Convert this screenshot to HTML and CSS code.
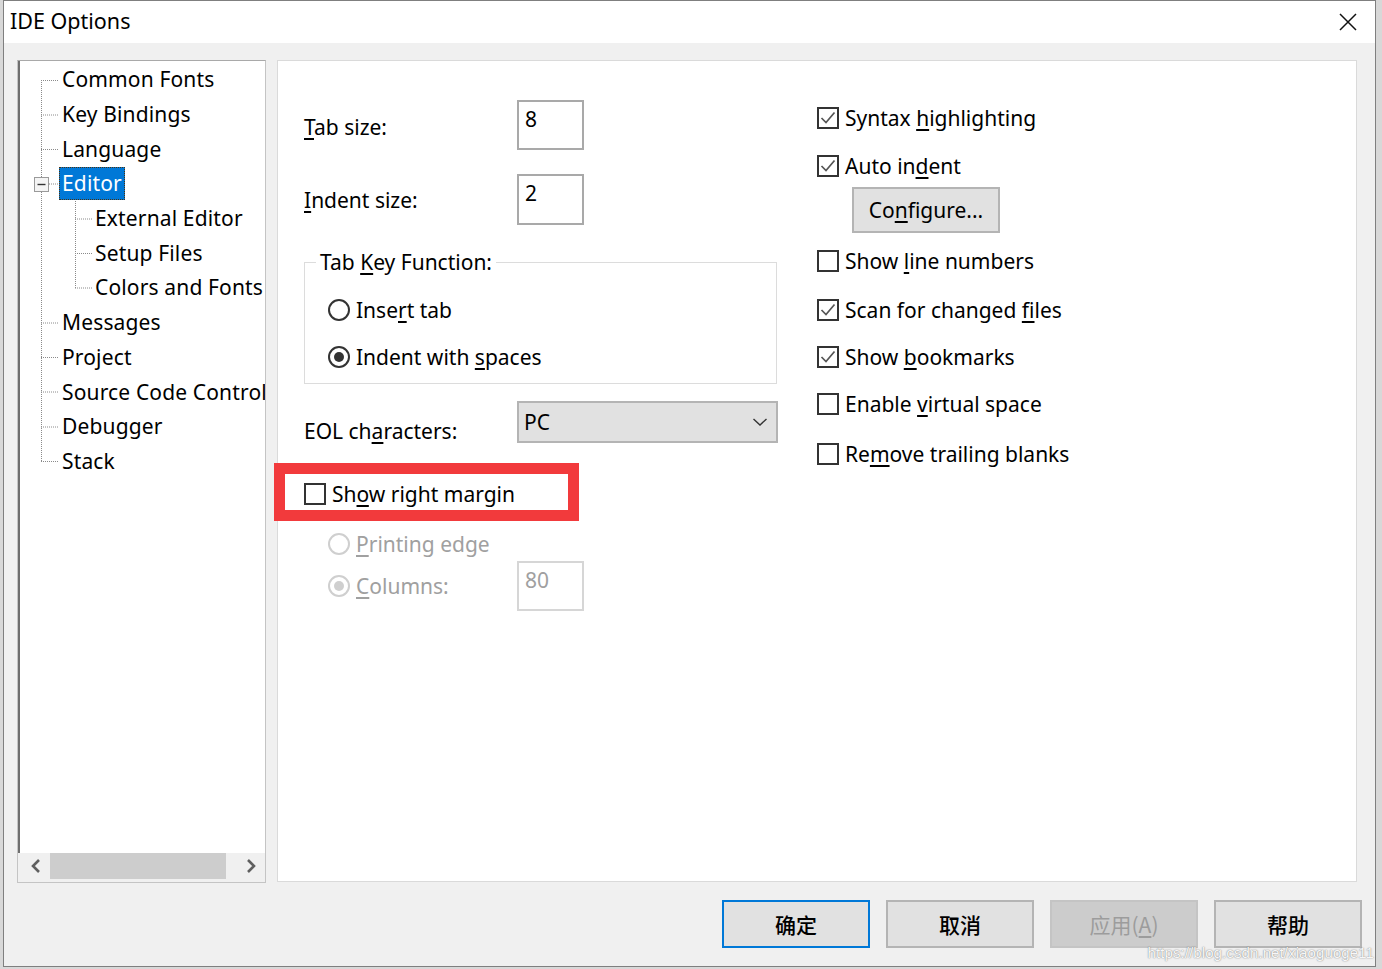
FILE: index.html
```html
<!DOCTYPE html>
<html>
<head>
<meta charset="utf-8">
<title>IDE Options</title>
<link rel="stylesheet" href="styles.css">
</head>
<body>
<div class="window">
  <div class="titlebar">
    <span class="title">IDE Options</span>
    <svg class="close" width="18" height="18" viewBox="0 0 18 18"><path d="M1 1L17 17M17 1L1 17" stroke="#111" stroke-width="1.5" fill="none"/></svg>
  </div>

  <div class="content">
    <div class="tree">
      <div class="tree-list">
        <svg class="tree-lines" width="246" height="420" viewBox="0 0 246 420">
          <g stroke="#8a8a8a" stroke-width="1" stroke-dasharray="1 1" fill="none">
            <path d="M23.5 19V117M23.5 131V401"/>
            <path d="M23 19.5H40M23 54H40M23 88.5H40M31 123H40M23 262H40M23 296.5H40M23 331H40M23 366H40M23 400.5H40"/>
            <path d="M57.5 140V227M57 158H74M57 192.5H74M57 227H74"/>
          </g>
          <rect x="16.5" y="116.5" width="14" height="14" fill="#f4f4f4" stroke="#9a9a9a"/>
          <path d="M19.5 123.5H27.5" stroke="#333" stroke-width="1.4"/>
        </svg>
        <div class="node l1">Common Fonts</div>
        <div class="node l1">Key Bindings</div>
        <div class="node l1">Language</div>
        <div class="node l1"><span class="sel">Editor</span></div>
        <div class="node l2">External Editor</div>
        <div class="node l2">Setup Files</div>
        <div class="node l2">Colors and Fonts</div>
        <div class="node l1">Messages</div>
        <div class="node l1">Project</div>
        <div class="node l1">Source Code Control</div>
        <div class="node l1">Debugger</div>
        <div class="node l1">Stack</div>
      </div>
      <div class="hscroll">
        <div class="sbtn left"><svg width="12" height="16" viewBox="0 0 12 16"><path d="M9 2L3 8L9 14" stroke="#5f5f5f" stroke-width="2.6" fill="none"/></svg></div>
        <div class="track"><div class="thumb"></div></div>
        <div class="sbtn right"><svg width="12" height="16" viewBox="0 0 12 16"><path d="M3 2L9 8L3 14" stroke="#5f5f5f" stroke-width="2.6" fill="none"/></svg></div>
      </div>
    </div>

    <div class="panel">
      <div class="col-left">
        <div class="field">
          <span class="flabel"><u>T</u>ab size:</span>
          <div class="num">8</div>
        </div>
        <div class="field second">
          <span class="flabel"><u>I</u>ndent size:</span>
          <div class="num">2</div>
        </div>
        <div class="group">
          <span class="legend">Tab <u>K</u>ey Function:</span>
          <div class="opt"><span class="radio"></span><span>Inse<u>r</u>t tab</span></div>
          <div class="opt"><span class="radio on"></span><span>Indent with <u>s</u>paces</span></div>
        </div>
        <div class="field eol">
          <span class="flabel">EOL ch<u>a</u>racters:</span>
          <div class="combo"><span>PC</span><svg width="16" height="10" viewBox="0 0 16 10"><path d="M1.5 2L8 8L14.5 2" stroke="#333" stroke-width="1.4" fill="none"/></svg></div>
        </div>
        <div class="annot">
          <div class="opt"><span class="check"></span><span>Sh<u>o</u>w right margin</span></div>
        </div>
        <div class="opt dis printing"><span class="radio"></span><span><u>P</u>rinting edge</span></div>
        <div class="field cols">
          <div class="opt dis flabel"><span class="radio on"></span><span><u>C</u>olumns:</span></div>
          <div class="num dis">80</div>
        </div>
      </div>

      <div class="col-right">
        <div class="opt r1"><span class="check on"><svg width="18" height="18" viewBox="0 0 18 18"><path d="M2.5 9L7 13.5L15.5 3.5" stroke="#555" stroke-width="1.7" fill="none"/></svg></span><span>Syntax <u>h</u>ighlighting</span></div>
        <div class="opt r2"><span class="check on"><svg width="18" height="18" viewBox="0 0 18 18"><path d="M2.5 9L7 13.5L15.5 3.5" stroke="#555" stroke-width="1.7" fill="none"/></svg></span><span>Auto in<u>d</u>ent</span></div>
        <div class="btn configure"><span>Co<u>n</u>figure...</span></div>
        <div class="opt r3"><span class="check"></span><span>Show <u>l</u>ine numbers</span></div>
        <div class="opt r4"><span class="check on"><svg width="18" height="18" viewBox="0 0 18 18"><path d="M2.5 9L7 13.5L15.5 3.5" stroke="#555" stroke-width="1.7" fill="none"/></svg></span><span>Scan for changed <u>f</u>iles</span></div>
        <div class="opt r5"><span class="check on"><svg width="18" height="18" viewBox="0 0 18 18"><path d="M2.5 9L7 13.5L15.5 3.5" stroke="#555" stroke-width="1.7" fill="none"/></svg></span><span>Show <u>b</u>ookmarks</span></div>
        <div class="opt r5"><span class="check"></span><span>Enable <u>v</u>irtual space</span></div>
        <div class="opt r6"><span class="check"></span><span>Re<u>m</u>ove trailing blanks</span></div>
      </div>
    </div>
  </div>

  <div class="footer">
    <div class="btn dlg default">确定</div>
    <div class="btn dlg">取消</div>
    <div class="btn dlg disabled"><span>应用(<u>A</u>)</span></div>
    <div class="btn dlg">帮助</div>
  </div>
  <div class="watermark">https://blog.csdn.net/xiaoguoge11</div>
</div>
</body>
</html>
```

FILE: styles.css
```css
* {
  box-sizing: border-box;
  margin: 0;
  padding: 0;
}

html, body {
  width: 1382px;
  height: 969px;
  overflow: hidden;
}

body {
  background: #d8d8d8;
  padding-left: 3px;
  font-family: "Noto Sans", "Noto Sans CJK SC", sans-serif;
  font-size: 21px;
  color: #000;
}

u {
  text-decoration: underline;
  text-decoration-thickness: 1.5px;
  text-underline-offset: 3px;
}

.window {
  position: relative;
  width: 1373px;
  height: 967px;
  border: 1px solid #7f7f7f;
  background: #f0f0f0;
  display: flex;
  flex-direction: column;
  overflow: hidden;
}

/* Title bar */
.titlebar {
  height: 42px;
  background: #fff;
  display: flex;
  align-items: center;
  justify-content: space-between;
  padding: 0 18px 0 6px;
  flex: none;
}

.title {
  font-size: 21.5px;
  line-height: 28px;
  margin-top: -2px;
}

.close {
  display: block;
}

/* Content */
.content {
  display: flex;
  gap: 11px;
  padding: 17px 0 0 13px;
  height: 840px;
  flex: none;
}

.tree {
  position: relative;
  width: 249px;
  height: 823px;
  background: #fff;
  border: 1px solid #c4c4c4;
  border-top-color: #a9a9a9;
  box-shadow: inset 2px 0 0 #6e6e6e;
  display: flex;
  flex-direction: column;
}

.tree-list {
  position: relative;
  flex: 1;
  overflow: hidden;
  padding-top: 1px;
  white-space: nowrap;
  letter-spacing: 0.15px;
}

.tree-lines {
  position: absolute;
  left: 0;
  top: 0;
}

.node {
  position: relative;
  height: 34.7px;
  display: flex;
  align-items: center;
  line-height: 30px;
}

.node.l1 {
  padding-left: 44px;
}

.node.l2 {
  padding-left: 77px;
}

.sel {
  background: #0078d7;
  color: #fff;
  line-height: 31px;
  padding: 0 2px;
  margin-left: -3px;
  border: 1px dotted #4a3210;
}

.hscroll {
  height: 29px;
  display: flex;
  background: #f0f0f0;
  flex: none;
}

.sbtn {
  display: flex;
  justify-content: center;
  height: 26px;
  align-items: center;
}

.sbtn.left {
  width: 31px;
  padding-left: 4px;
}

.sbtn.right {
  width: 29px;
}

.track {
  flex: 1;
  padding-left: 1px;
}

.thumb {
  width: 176px;
  height: 26px;
  background: #cdcdcd;
}

/* Main panel */
.panel {
  width: 1080px;
  height: 822px;
  background: #fff;
  border: 1px solid #dadada;
  display: flex;
  padding: 39px 0 0 26px;
}

.col-left {
  width: 475px;
  display: flex;
  flex-direction: column;
}

.field {
  display: flex;
  align-items: center;
}

.flabel {
  width: 213px;
  flex: none;
  line-height: 30px;
  padding-top: 4px;
}

.num {
  width: 67px;
  height: 50px;
  border: 2px solid #a9a9a9;
  background: #fff;
  padding: 2px 0 0 6px;
  line-height: 30px;
}

.field.second {
  margin-top: 24px;
}

.field.second .flabel {
  padding-top: 0;
}

.field.second .num {
  height: 51px;
}

.group {
  position: relative;
  margin-top: 37px;
  width: 473px;
  height: 122px;
  border: 1px solid #dcdcdc;
  padding: 30px 0 0 23px;
  display: flex;
  flex-direction: column;
  gap: 13px;
}

.legend {
  position: absolute;
  left: 11px;
  top: -16px;
  background: #fff;
  padding: 0 4px;
  line-height: 30px;
}

.opt {
  display: flex;
  align-items: center;
  height: 34px;
  line-height: 30px;
  white-space: nowrap;
}

.radio {
  width: 22px;
  height: 22px;
  border: 2px solid #333;
  border-radius: 50%;
  background: #fff;
  flex: none;
  display: flex;
  margin-right: 6px;
}

.radio.on::after {
  content: "";
  width: 10px;
  height: 10px;
  border-radius: 50%;
  background: #333;
  margin: auto;
}

.check {
  width: 22px;
  height: 22px;
  border: 2px solid #333;
  background: #fff;
  flex: none;
  display: flex;
  align-items: center;
  justify-content: center;
  margin-right: 6px;
}

.check svg {
  display: block;
}

.opt.dis {
  color: #a0a0a0;
}

.opt.dis .radio {
  border-color: #cfcfcf;
}

.opt.dis .radio.on::after {
  background: #cfcfcf;
}

.field.eol {
  margin-top: 17px;
  align-items: flex-start;
}

.field.eol .flabel {
  padding-top: 15px;
}

.combo {
  width: 261px;
  height: 42px;
  background: #e1e1e1;
  border: 2px solid #b4b4b4;
  display: flex;
  align-items: center;
  justify-content: space-between;
  padding: 0 8px 0 5px;
  line-height: 30px;
}

.annot {
  margin: 17px 0 0 -30px;
  width: 305px;
  height: 58px;
  border: 11px solid #f23a3c;
  padding: 0 0 0 19px;
  display: flex;
  align-items: center;
}

.annot .opt {
  margin-top: 3px;
}

.opt.printing {
  margin: 6px 0 0 24px;
}

.field.cols {
  margin-top: 0;
}

.field.cols .flabel {
  padding: 0 0 0 24px;
}

.num.dis {
  color: #a0a0a0;
  border-color: #d6d6d6;
  height: 50px;
}

/* Right column */
.col-right {
  margin-left: 38px;
  display: flex;
  flex-direction: column;
  padding-top: 1px;
}

.opt.r2 {
  margin-top: 14px;
}

.btn {
  background: #e1e1e1;
  border: 2px solid #b4b4b4;
  display: flex;
  align-items: center;
  justify-content: center;
  line-height: 30px;
}

.btn.configure {
  margin: 4px 0 0 35px;
  width: 148px;
  height: 46px;
}

.opt.r3 {
  margin-top: 11px;
}

.opt.r4 {
  margin-top: 15px;
}

.opt.r5 {
  margin-top: 13px;
}

.opt.r6 {
  margin-top: 16px;
}

/* Footer */
.footer {
  flex: 1;
  display: flex;
  justify-content: flex-end;
  gap: 16px;
  padding: 17px 13px 0 0;
}

.btn.dlg {
  width: 148px;
  height: 48px;
  font-family: "Noto Sans CJK SC", sans-serif;
  font-size: 21px;
  font-weight: 500;
}

.btn.default {
  border: 2px solid #0078d7;
}

.btn.disabled {
  background: #cccccc;
  border-color: #c4c4c4;
  color: #9c9c9c;
  font-weight: 400;
}

.watermark {
  position: absolute;
  right: 1px;
  bottom: 5px;
  font-family: "Liberation Sans", sans-serif;
  font-size: 15px;
  color: rgba(255, 255, 255, 0.95);
  text-shadow: 0 0 1px rgba(60, 60, 60, 0.6), 0 0 2px rgba(60, 60, 60, 0.3);
  letter-spacing: 0.1px;
}
```
